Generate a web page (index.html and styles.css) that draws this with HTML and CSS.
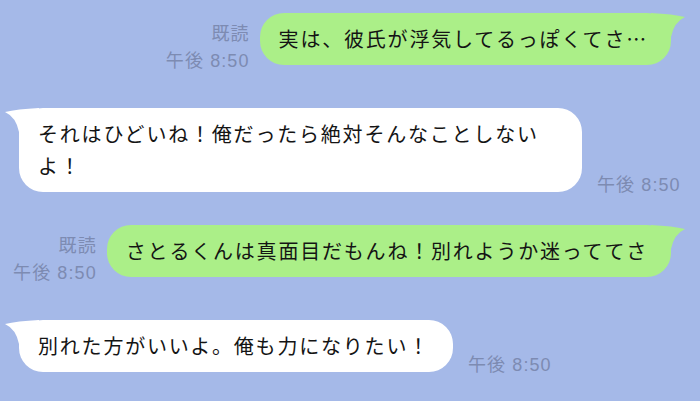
FILE: index.html
```html
<!DOCTYPE html>
<html>
    <head>
        <title>トーク</title>
        <meta charset="UTF-8">
        <meta name="viewport" content="width=device-width, initial-scale=1.0">
        <link rel="stylesheet" href="styles.css">
    </head>
    <body>
        <div class="chat">
            <!-- sent -->
            <div class="row row--out">
                <div class="meta">
                    <span>既読</span>
                    <span>午後 8:50</span>
                </div>
                <div class="bubble bubble--out">実は、彼氏が浮気してるっぽくてさ…<svg class="tail" viewBox="0 0 34 24"><path d="M0 0 Q22 1 34 4 Q23 9 20 24 L0 24 Z"/></svg></div>
            </div>

            <!-- received -->
            <div class="row row--in">
                <div class="bubble bubble--in">それはひどいね！俺だったら絶対そんなことしないよ！<svg class="tail" viewBox="0 0 34 24"><path d="M0 0 Q22 1 34 4 Q23 9 20 24 L0 24 Z"/></svg></div>
                <div class="time">午後 8:50</div>
            </div>

            <div class="row row--out row--tight">
                <div class="meta">
                    <span>既読</span>
                    <span>午後 8:50</span>
                </div>
                <div class="bubble bubble--out">さとるくんは真面目だもんね！別れようか迷っててさ<svg class="tail" viewBox="0 0 34 24"><path d="M0 0 Q22 1 34 4 Q23 9 20 24 L0 24 Z"/></svg></div>
            </div>

            <div class="row row--in">
                <div class="bubble bubble--in">別れた方がいいよ。俺も力になりたい！<svg class="tail" viewBox="0 0 34 24"><path d="M0 0 Q22 1 34 4 Q23 9 20 24 L0 24 Z"/></svg></div>
                <div class="time">午後 8:50</div>
            </div>
        </div>
    </body>
</html>
```

FILE: styles.css
```css
html, body {
    height: 100%;
}

body {
    margin: 0;
    background-color: #a5b9e8;
    font-family: "Noto Sans CJK JP", sans-serif;
    color: #141414;
    overflow: hidden;
}

.chat {
    display: flex;
    flex-direction: column;
    padding: 13px 29px 0 8px;
}

.row {
    display: flex;
    margin-top: 43px;
}
.row:first-child {
    margin-top: 0;
}
.row--tight {
    margin-top: 33px;
}

.row--out {
    justify-content: flex-end;
    gap: 10px;
}
.row--in {
    justify-content: flex-start;
    gap: 15px;
    padding-left: 11px;
}

.bubble {
    position: relative;
    flex-shrink: 0;
    padding: 10px 23px 10px 19px;
    border-radius: 24px;
    font-size: 20px;
    line-height: 32px;
    letter-spacing: 1.8px;
    white-space: nowrap;
}

.bubble--out {
    background-color: #abef88;
}
.bubble--in {
    background-color: #ffffff;
    max-width: 563px;
    box-sizing: border-box;
    white-space: normal;
}

.tail {
    position: absolute;
    top: 0;
    width: 34px;
    height: 24px;
}
.bubble--out .tail {
    left: calc(100% - 20px);
    fill: #abef88;
}
.bubble--in .tail {
    right: calc(100% - 20px);
    fill: #ffffff;
    transform: scaleX(-1);
}

.meta, .time {
    flex-shrink: 0;
    font-family: "Liberation Sans", "Noto Sans CJK JP", sans-serif;
    font-size: 18px;
    letter-spacing: 1.1px;
    color: #7d8bb2;
    white-space: nowrap;
}

.meta {
    display: flex;
    flex-direction: column;
    align-items: flex-end;
    margin-top: 8px;
    margin-bottom: -10px;
    line-height: 27px;
}

.time {
    align-self: flex-end;
    line-height: 14px;
}
```
